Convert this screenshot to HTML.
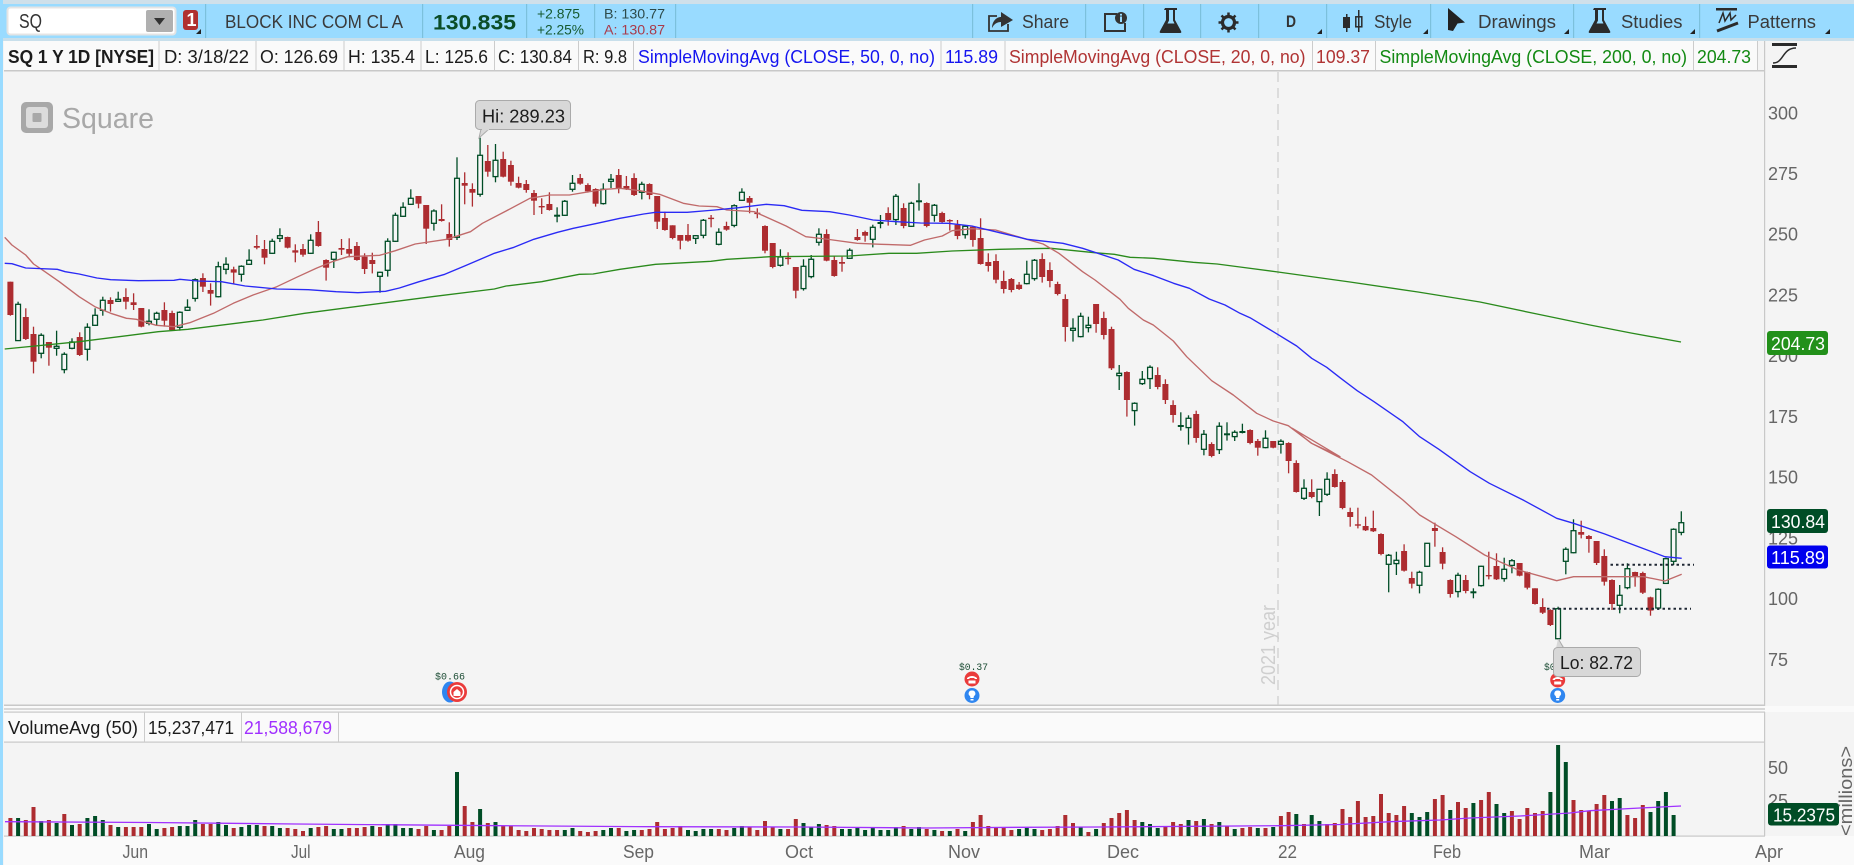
<!DOCTYPE html>
<html><head><meta charset="utf-8"><title>SQ chart</title>
<style>
html,body{margin:0;padding:0;background:#f4f4f4;width:1854px;height:865px;overflow:hidden}
svg{display:block;font-family:"Liberation Sans",sans-serif}
text{white-space:pre}
.l{font-size:18px;fill:#1c1c1c}
.tb{font-size:18px;fill:#3a3a3a}
.ax{font-size:18px;fill:#666}
.tg{font-size:18px;fill:#fff}
</style></head><body>
<svg id="s" xmlns="http://www.w3.org/2000/svg" width="1854" height="865" viewBox="0 0 1854 865">
<rect width="1854" height="865" fill="#f4f4f4"/>
<rect width="1854" height="4" fill="#cfe0ea"/>
<rect y="4" width="1854" height="34" fill="#99dbff"/>
<rect y="38" width="1854" height="3" fill="#c8dfeb"/>
<rect x="0" y="0" width="3" height="865" fill="#99dbff"/>
<rect x="4" y="41" width="1753" height="29" fill="#fafafa"/>
<rect x="4" y="70" width="1761" height="1.5" fill="#c8c8c8"/>
<rect x="4" y="712" width="1761" height="30" fill="#fafafa"/>
<rect x="4" y="836" width="1850" height="29" fill="#fafafa"/>
<rect x="4" y="704.5" width="1761" height="1.5" fill="#c8c8c8"/>
<rect x="4" y="706" width="1850" height="6" fill="#fafafa"/>
<rect x="4" y="708" width="1761" height="2" fill="#d8d8d8"/>
<rect x="4" y="711.5" width="1761" height="1.2" fill="#c8c8c8"/>
<rect x="4" y="741.5" width="1761" height="1.2" fill="#c8c8c8"/>
<rect x="4" y="835.5" width="1761" height="1.2" fill="#c8c8c8"/>
<rect x="1764" y="41" width="1.2" height="665" fill="#c8c8c8"/>
<rect x="1764" y="712" width="1.2" height="124" fill="#c8c8c8"/>

<!-- toolbar dividers -->
<g fill="#7cc0dc">
<rect x="205" y="4" width="1.2" height="34"/><rect x="422" y="4" width="1.2" height="34"/><rect x="526" y="4" width="1.2" height="34"/><rect x="594" y="4" width="1.2" height="34"/><rect x="675" y="4" width="1.2" height="34"/>
<rect x="972" y="4" width="1.2" height="34"/><rect x="1085" y="4" width="1.2" height="34"/><rect x="1143" y="4" width="1.2" height="34"/><rect x="1200" y="4" width="1.2" height="34"/><rect x="1258" y="4" width="1.2" height="34"/><rect x="1326" y="4" width="1.2" height="34"/><rect x="1430" y="4" width="1.2" height="34"/><rect x="1573" y="4" width="1.2" height="34"/><rect x="1699" y="4" width="1.2" height="34"/>
</g>
<!-- symbol box -->
<rect x="7.5" y="7.5" width="168" height="27" rx="3" fill="#fff" stroke="#e4e4e4" stroke-width="2"/>
<text x="19" y="28" font-size="20" fill="#333" textLength="23" lengthAdjust="spacingAndGlyphs">SQ</text>
<rect x="146" y="10" width="27" height="22" rx="2" fill="#b0b0b0"/>
<path d="M154 18h11l-5.500 7z" fill="#333"/>
<rect x="183" y="10" width="15" height="20" rx="3" fill="#b03030"/>
<text x="186.500" y="26" font-size="18" font-weight="bold" fill="#fff">1</text>
<path d="M201 29v5h-5z" fill="#222"/>
<text x="225" y="28" class="tb" textLength="178" lengthAdjust="spacingAndGlyphs" fill="#3c5a68">BLOCK INC COM CL A</text>
<text x="433" y="29.500" font-size="21" font-weight="bold" fill="#0b4d28" textLength="83" lengthAdjust="spacingAndGlyphs">130.835</text>
<text x="537" y="18.500" font-size="14" fill="#165a30" textLength="43" lengthAdjust="spacingAndGlyphs">+2.875</text>
<text x="537" y="34.500" font-size="14" fill="#165a30" textLength="47" lengthAdjust="spacingAndGlyphs">+2.25%</text>
<text x="604" y="18.500" font-size="14" fill="#2d4a4a" textLength="61" lengthAdjust="spacingAndGlyphs">B: 130.77</text>
<text x="604" y="34.500" font-size="14" fill="#a93b4b" textLength="61" lengthAdjust="spacingAndGlyphs">A: 130.87</text>

<!-- toolbar right -->
<path d="M997 16h-8v15h19v-7" fill="none" stroke="#333" stroke-width="1.800"/>
<path d="M1001 12l12 8-12 7v-5c-4 0-7 2-9 6 0-6 4-11 9-11z" fill="#333"/>
<text x="1022" y="28" class="tb" textLength="47" lengthAdjust="spacingAndGlyphs">Share</text>
<path d="M1104 13h13v2h-11v15h18v-7h2v9h-22z" fill="#333"/>
<circle cx="1121" cy="18" r="6" fill="#333"/><rect x="1120" y="16.500" width="2" height="5.500" fill="#99dbff"/><rect x="1120" y="13.800" width="2" height="1.800" fill="#99dbff"/>
<path d="M1165 8h12v2h-2v10l6 11q1 2-1 2h-19q-2 0-1-2l6-11v-10h-2z" fill="#2b2b2b"/><path d="M1169 10h4v10.500l1.500 3h-7l1.500-3z" fill="#99dbff"/>
<g stroke="#2b2b2b" stroke-width="2.500"><path d="M1228.500 12.500v20M1218.500 22.500h20M1221.500 15.500l14 14M1235.500 15.500l-14 14"/></g>
<circle cx="1228.500" cy="22.500" r="6" fill="#99dbff" stroke="#2b2b2b" stroke-width="3.200"/>
<text x="1286" y="27" font-size="17" font-weight="bold" fill="#333" textLength="10" lengthAdjust="spacingAndGlyphs">D</text>
<path d="M1322 29v5h-5z" fill="#222"/>
<rect x="1343" y="17" width="7" height="11" fill="#2b2b2b"/><rect x="1346" y="14" width="1.500" height="18" fill="#2b2b2b"/>
<rect x="1355.800" y="16.800" width="6" height="10" fill="none" stroke="#2b2b2b" stroke-width="1.500"/><rect x="1358" y="10" width="1.500" height="22" fill="#2b2b2b"/>
<text x="1374" y="28" class="tb" textLength="38" lengthAdjust="spacingAndGlyphs">Style</text>
<path d="M1428 29v5h-5z" fill="#222"/>
<path d="M1448 8l17 14.500-7.500 1 -4.500 7.500-5-1z" fill="#222"/>
<text x="1478" y="28" class="tb" textLength="78" lengthAdjust="spacingAndGlyphs">Drawings</text>
<path d="M1569 29v5h-5z" fill="#222"/>
<path d="M1594 8h12v2h-2v10l6 11q1 2-1 2h-19q-2 0-1-2l6-11v-10h-2z" fill="#2b2b2b"/><path d="M1598 10h4v10.500l1.500 3h-7l1.500-3z" fill="#99dbff"/>
<text x="1621" y="28" class="tb" textLength="61.500" lengthAdjust="spacingAndGlyphs">Studies</text>
<path d="M1695 29v5h-5z" fill="#222"/>
<rect x="1716" y="8" width="21" height="2.500" fill="#2b2b2b"/>
<path d="M1719 23l4-10 2 8 5-8 1 7 5-5" fill="none" stroke="#2b2b2b" stroke-width="1.500"/>
<path d="M1717 31l21-8" fill="none" stroke="#2b2b2b" stroke-width="3"/>
<text x="1747.500" y="28" class="tb" textLength="68.500" lengthAdjust="spacingAndGlyphs">Patterns</text>
<path d="M1830 29v5h-5z" fill="#222"/>

<!-- legend -->
<g fill="#cccccc">
<rect x="158.500" y="41" width="1" height="29"/><rect x="255.500" y="41" width="1" height="29"/><rect x="343.500" y="41" width="1" height="29"/><rect x="420.500" y="41" width="1" height="29"/><rect x="494" y="41" width="1" height="29"/><rect x="578" y="41" width="1" height="29"/><rect x="633" y="41" width="1" height="29"/><rect x="940.500" y="41" width="1" height="29"/><rect x="1004.500" y="41" width="1" height="29"/><rect x="1312" y="41" width="1" height="29"/><rect x="1375" y="41" width="1" height="29"/><rect x="1693" y="41" width="1" height="29"/><rect x="1757" y="41" width="1" height="29"/>
<rect x="144" y="712" width="1" height="30"/><rect x="241" y="712" width="1" height="30"/><rect x="338" y="712" width="1" height="30"/>
</g>
<text x="8" y="63" class="l" font-weight="bold" textLength="146" lengthAdjust="spacingAndGlyphs">SQ 1 Y 1D [NYSE]</text>
<text x="164" y="63" class="l" textLength="85" lengthAdjust="spacingAndGlyphs">D: 3/18/22</text>
<text x="260" y="63" class="l" textLength="78" lengthAdjust="spacingAndGlyphs">O: 126.69</text>
<text x="348" y="63" class="l" textLength="67" lengthAdjust="spacingAndGlyphs">H: 135.4</text>
<text x="425" y="63" class="l" textLength="63" lengthAdjust="spacingAndGlyphs">L: 125.6</text>
<text x="498" y="63" class="l" textLength="74" lengthAdjust="spacingAndGlyphs">C: 130.84</text>
<text x="583" y="63" class="l" textLength="44" lengthAdjust="spacingAndGlyphs">R: 9.8</text>
<text x="638" y="63" font-size="18" fill="#1515f0" textLength="297" lengthAdjust="spacingAndGlyphs">SimpleMovingAvg (CLOSE, 50, 0, no)</text>
<text x="945" y="63" font-size="18" fill="#1515f0" textLength="53" lengthAdjust="spacingAndGlyphs">115.89</text>
<text x="1009" y="63" font-size="18" fill="#b03434" textLength="296.500" lengthAdjust="spacingAndGlyphs">SimpleMovingAvg (CLOSE, 20, 0, no)</text>
<text x="1316" y="63" font-size="18" fill="#b03434" textLength="54" lengthAdjust="spacingAndGlyphs">109.37</text>
<text x="1379.500" y="63" font-size="18" fill="#138a13" textLength="307.500" lengthAdjust="spacingAndGlyphs">SimpleMovingAvg (CLOSE, 200, 0, no)</text>
<text x="1697" y="63" font-size="18" fill="#138a13" textLength="54" lengthAdjust="spacingAndGlyphs">204.73</text>
<rect x="1772" y="43" width="25" height="3" fill="#2b2b2b"/><rect x="1772" y="65" width="25" height="3" fill="#2b2b2b"/>
<path d="M1773 63c11 0 9-15 23-15" fill="none" stroke="#2b2b2b" stroke-width="1.500"/>

<!-- logo -->
<rect x="21" y="102" width="32" height="31" rx="5" fill="#a8a8a8"/>
<rect x="26" y="107" width="22" height="21" rx="3" fill="#dcdcdc"/>
<rect x="32.500" y="113" width="9" height="9" rx="1" fill="#a8a8a8"/>
<text x="62" y="128" font-size="29" fill="#a8a8a8" textLength="92" lengthAdjust="spacingAndGlyphs">Square</text>

<!-- year marker -->
<path d="M1278 72V705" stroke="#cfcfcf" stroke-width="1.300" stroke-dasharray="10 6" fill="none"/>
<text transform="translate(1275 685) rotate(-90)" font-size="20" fill="#cfcfcf" textLength="80" lengthAdjust="spacingAndGlyphs">2021 year</text>

<g id="candles"></g>
<g id="mas" fill="none" stroke-width="1.350" stroke-linejoin="round"></g>

<!-- dotted lines -->
<path d="M1610.500 564.800H1694M1547 608.800H1691" stroke="#1f2733" stroke-width="2" stroke-dasharray="2.500 3" fill="none"/>

<!-- Hi / Lo labels -->
<path d="M481 129l-2 9 10-9z" fill="#d8d8d8" stroke="#aaa" stroke-width="1"/>
<rect x="475.500" y="100.500" width="95" height="29" rx="4" fill="#d8d8d8" stroke="#aaa"/>
<path d="M482 129.200h7" stroke="#d8d8d8" stroke-width="2"/>
<text x="482" y="122.500" class="l" textLength="83" lengthAdjust="spacingAndGlyphs">Hi: 289.23</text>

<!-- dividends -->
<g font-family="Liberation Mono,monospace" font-size="10" fill="#1d4d35">
<text x="435" y="679.500" textLength="30" lengthAdjust="spacingAndGlyphs">$0.66</text>
<text x="959" y="670" textLength="29" lengthAdjust="spacingAndGlyphs">$0.37</text>
<text x="1544" y="670" textLength="29" lengthAdjust="spacingAndGlyphs">$0.26</text>
</g>
<g>
<ellipse cx="450" cy="692" rx="8" ry="10.500" fill="#2f86f0"/>
<circle cx="457" cy="692" r="10" fill="#ea3b3b"/><circle cx="457" cy="692" r="6.500" fill="none" stroke="#fff" stroke-width="1.500"/><path d="M453.500 696v-4l3.500-3 3.500 3v4z" fill="#fff"/>
<ellipse cx="972" cy="679" rx="7.500" ry="7.500" fill="#ea3b3b"/><path d="M967 678q5-4 10 0v1h-2.500v-1h-5v1H967zM968.500 680.500h7v3h-7z" fill="#fff"/>
<ellipse cx="972" cy="695.500" rx="7.500" ry="7.500" fill="#2f86f0"/><path d="M972 690.500a3 3 0 0 1 2 5.500l-.5 2h-3l-.5-2a3 3 0 0 1 2-5.500zM970.500 699h3v1.500h-3z" fill="#fff"/>
<ellipse cx="1557.700" cy="680" rx="7.500" ry="7.500" fill="#ea3b3b"/><path d="M1552.700 679q5-4 10 0v1h-2.500v-1h-5v1h-2.500zM1554.200 681.500h7v3h-7z" fill="#fff"/>
<ellipse cx="1557.700" cy="695.500" rx="7.500" ry="7.500" fill="#2f86f0"/><path d="M1557.700 690.500a3 3 0 0 1 2 5.500l-.5 2h-3l-.5-2a3 3 0 0 1 2-5.500zM1556.200 699h3v1.500h-3z" fill="#fff"/>
</g>
<path d="M1558 639l7 9h-9z" fill="#d8d8d8"/><path d="M1558.500 639l4.500 8" stroke="#aaa" fill="none"/>
<rect x="1553.500" y="647.500" width="87" height="29" rx="4" fill="#d8d8d8" stroke="#aaa"/>
<text x="1560" y="669" class="l" textLength="73" lengthAdjust="spacingAndGlyphs">Lo: 82.72</text>

<!-- price axis -->
<g class="ax">
<text x="1768" y="119.500" class="ax" textLength="30" lengthAdjust="spacingAndGlyphs">300</text>
<text x="1768" y="180" class="ax" textLength="30" lengthAdjust="spacingAndGlyphs">275</text>
<text x="1768" y="240.700" class="ax" textLength="30" lengthAdjust="spacingAndGlyphs">250</text>
<text x="1768" y="301.400" class="ax" textLength="30" lengthAdjust="spacingAndGlyphs">225</text>
<text x="1768" y="362" class="ax" textLength="30" lengthAdjust="spacingAndGlyphs">200</text>
<text x="1768" y="423" class="ax" textLength="30" lengthAdjust="spacingAndGlyphs">175</text>
<text x="1768" y="483.500" class="ax" textLength="30" lengthAdjust="spacingAndGlyphs">150</text>
<text x="1768" y="544.500" class="ax" textLength="30" lengthAdjust="spacingAndGlyphs">125</text>
<text x="1768" y="605" class="ax" textLength="30" lengthAdjust="spacingAndGlyphs">100</text>
<text x="1768" y="666" class="ax" textLength="20" lengthAdjust="spacingAndGlyphs">75</text>
<text x="1768" y="774" class="ax" textLength="20" lengthAdjust="spacingAndGlyphs">50</text>
<text x="1768" y="807" class="ax" textLength="20" lengthAdjust="spacingAndGlyphs">25</text>
</g>
<rect x="1767" y="331" width="61" height="24" rx="3" fill="#22901a"/>
<text x="1771" y="350" class="tg" textLength="54" lengthAdjust="spacingAndGlyphs">204.73</text>
<rect x="1767" y="509" width="61" height="24" rx="3" fill="#004d26"/>
<text x="1771" y="528" class="tg" textLength="54" lengthAdjust="spacingAndGlyphs">130.84</text>
<rect x="1767" y="545.500" width="61" height="23" rx="3" fill="#0000ee"/>
<text x="1771" y="564" class="tg" textLength="54" lengthAdjust="spacingAndGlyphs">115.89</text>
<rect x="1768" y="803" width="71" height="22.500" rx="3" fill="#004d26"/>
<text x="1773" y="821.500" class="tg" textLength="62" lengthAdjust="spacingAndGlyphs">15.2375</text>
<text transform="translate(1852 836) rotate(-90)" font-size="18" fill="#666" textLength="90" lengthAdjust="spacingAndGlyphs">&lt;millions&gt;</text>

<!-- volume legend -->
<text x="8" y="734" class="l" textLength="130" lengthAdjust="spacingAndGlyphs">VolumeAvg (50)</text>
<text x="148" y="734" class="l" textLength="86" lengthAdjust="spacingAndGlyphs">15,237,471</text>
<text x="244" y="734" font-size="18" fill="#a030ff" textLength="88" lengthAdjust="spacingAndGlyphs">21,588,679</text>
<g id="vol"></g>
<path d="M5 821.700L150 822.500 296 824 500 825.700 650 826.700 800 827 927 828 1020 827.300 1100 827 1282 825.700 1340 824.500 1390 821.700 1440 820 1470 818 1520 816 1570 813 1590 810.700 1640 808 1681 806" fill="none" stroke="#a030ff" stroke-width="1.300"/>

<!-- date axis -->
<g>
<text x="122.500" y="858" class="ax" textLength="25.500" lengthAdjust="spacingAndGlyphs">Jun</text>
<text x="291" y="858" class="ax" textLength="19.500" lengthAdjust="spacingAndGlyphs">Jul</text>
<text x="454" y="858" class="ax" textLength="31" lengthAdjust="spacingAndGlyphs">Aug</text>
<text x="623" y="858" class="ax" textLength="31" lengthAdjust="spacingAndGlyphs">Sep</text>
<text x="785" y="858" class="ax" textLength="28" lengthAdjust="spacingAndGlyphs">Oct</text>
<text x="948" y="858" class="ax" textLength="32" lengthAdjust="spacingAndGlyphs">Nov</text>
<text x="1107" y="858" class="ax" textLength="32" lengthAdjust="spacingAndGlyphs">Dec</text>
<text x="1278" y="858" class="ax" textLength="19" lengthAdjust="spacingAndGlyphs">22</text>
<text x="1433" y="858" class="ax" textLength="28" lengthAdjust="spacingAndGlyphs">Feb</text>
<text x="1579" y="858" class="ax" textLength="31" lengthAdjust="spacingAndGlyphs">Mar</text>
<text x="1755" y="858" class="ax" textLength="28" lengthAdjust="spacingAndGlyphs">Apr</text>
</g>
</svg>
<script>
(function(){
var R='#ad2c30',G='#004d26';
function X(i){return 10.4+7.7*i}
var zones=[
[140,0,"r425,525,425,527;g493,602,485,602;r531,597,505,600;r582,665,560,700;g586,640,580,655;r606,623,606,677;g619,625,572,647;g643,689,637,700;g606,625,595,628;r591,645,577,648;g562,628,550,662;g526,556,505,558;g481,511,470,527;r480,492,472,515;g478,484,455,486;r471,485,445,508;r487,495,460,510;r504,560,504,562;g544,550,508,556;g520,538,515,558;r510,542,487,560;r519,570,512,572;g517,562,514,572;g502,511,478,513;g419,475,415,485;r414,440,400,456;r450,461,430,497;g380,470,365,472;g373,388,352,403;r388,398,380,432;g379,403,376,425;g361,373,328,375;r318,323,285,328;r327,353,300,373;g304,340,296,342;g287,295,265,306;r291,323,290,325;r331,338,313,367;r327,344,312,350;g301,340,283,342;r276,318,243,320;r360,383,358,422;g337,358,335,384;r324,329,297,345;r327,341,295,352;r318,360,306,362;r350,387,340,402;r360,372,338,400;g397,409,395,458;g304,391,295,410;g226,304,218,306;g202,229,187,231;g175,193,148,195;r168,191,168,205;r195,266,195,312;g213,250,208,272;r237,243,193,245;r282,300,247,320;g115,292,52,300"],
[120,59,"r189,197,157,253;r207,218,190,260;g106,223,53,230;r123,155,75,170;g121,170,72,187;r117,170,95,172;r135,185,122,197;r189,203,170,205;r192,210,180,218;r219,242,210,285;r258,260,235,282;r252,270,217,272;g284,289,262,307;g244,286,240,288;g190,208,165,215;r174,191,162,194;r195,214,190,218;r207,251,205,260;g208,251,190,254;g178,184,162,204;r165,206,147,220;r198,206,168,210;r174,225,160,228;g193,217,185,238;r192,225,190,238;r228,305,228,327;r294,330,275,332;r316,354,316,358;r345,362,345,388;r345,362,312,365;g347,355,345,372;g301,346,297,355;r293,296,285,322;g337,373,325,376;r318,329,305,332;g257,316,253,322"],
[140,95,"g157,181,145,183;r174,188,168,220;r218,220,205,235;r258,332,256,340;r309,381,309,385;g351,376,328,380;r353,356,337,374;r381,452,381,475;g379,446,358,452;g358,410,345,415;g283,307,265,317;r282,362,268,364;r360,408,347,410;r366,371,350,395;g331,355,325,357;r291,300,267,302;r276,287,272,305;g262,298,254,322;g246,250,225,265;r219,240,202,257;g169,239,162,255;r204,258,190,265;g190,259,185,261;g181,185,130,212;r189,258,187,262;g196,226,192,245;r219,246,215,248;r240,243,238,272;r254,288,240,298;g259,284,256,296;r260,300,258,320;r294,372,235,374;r366,378,340,395;r363,419,343,430;r423,447,392,460;r417,450,414,457;r434,447,426,450;g403,431,362,433;g361,416,357,422;r357,411,340,428;r390,423,367,442;r432,462,425,466;r477,561,463,605;g565,571,535,605;g529,590,518,592;g556,563,530,577;r492,552,492,578;r534,585,515,598;r567,685,560,690;g700,707,675,750"],
[280,145,"r276,360,274,410;g370,392,367,437;g298,311,273,315;g262,296,256,327;r285,321,262,328;r312,360,298,372;r375,405,361,428;g435,440,397,452;g415,443,406,494;r402,474,392,488;g463,508,450,526;r492,528,487,532;g439,509,427,522;g460,465,427,482;g457,470,451,483;g453,456,431,460;r450,489,448,493;r483,503,477,527;g475,503,451,505;r483,503,483,505;g484,493,478,521;r489,543,487,580;r549,636,541,638;g625,655,598,660;r636,651,598,655;g628,665,628,708;g598,643,577,648;r582,621,568,623"],
[380,173,"r306,384,300,388;r396,411,383,440;r433,435,383,445;r438,451,410,453;r444,454,392,456;r462,522,460,526;g526,553,522,637;g541,551,515,585;r513,572,493,575;r594,611,575,625;g577,616,572,640;g490,559,489,561;r444,453,428,500;r516,551,502,568;r600,642,598,653;g586,635,578,652;r600,633,585,640;g634,638,625,655;g559,617,557,620;r585,587,515,598;r558,598,520,600;g568,596,533,605;g542,556,537,580;r549,587,549,589;r576,623,575,628;r625,672,625,674;r681,698,655,702;r690,735,688,738;g686,776,680,778;g508,544,502,583;g452,518,418,520;r456,464,422,475;r468,477,465,518;r483,549,483,555;r528,605,508,617;r600,672,598,690;g646,676,615,700;g566,623,550,628;r576,590,575,620;r579,638,575,642;r652,692,650,707;g628,684,625,690;g536,610,533,612;g448,544,445,555;g428,457,394,466"]
];
var h='';
zones.forEach(function(z){
 var base=z[0],idx=z[1];
 z[2].split(';').forEach(function(s,k){
  var c=s[0],v=s.slice(1).split(',').map(Number),
  t=base+v[0]/3,b=base+v[1]/3,hi=base+v[2]/3,lo=base+v[3]/3,x=X(idx+k);
  var col=c=='r'?R:G;
  h+='<rect x="'+(x-0.65).toFixed(2)+'" y="'+hi.toFixed(1)+'" width="1.3" height="'+Math.max(lo-hi,1).toFixed(1)+'" fill="'+col+'"/>';
  if(c=='r'){
   h+='<rect x="'+(x-3).toFixed(2)+'" y="'+t.toFixed(1)+'" width="6" height="'+Math.max(b-t,1.4).toFixed(1)+'" fill="'+col+'"/>';
  }else if(b-t<2){
   h+='<rect x="'+(x-3).toFixed(2)+'" y="'+t.toFixed(1)+'" width="6" height="2" fill="'+col+'"/>';
  }else{
   h+='<rect x="'+(x-2.4).toFixed(2)+'" y="'+t.toFixed(1)+'" width="4.8" height="'+(b-t).toFixed(1)+'" fill="#f7f7f7" stroke="'+col+'" stroke-width="1.300"/>';
  }
 });
});
document.getElementById('candles').innerHTML=h;

function L(pts,fx,base){return pts.map(function(p){return fx(p[0]).toFixed(1)+' '+(base+p[1]/3).toFixed(1)}).join(' L')}
function z3(x){return x/2.529}
function z4(x){return 620+x/2.529}
function z10(x){return 1040+x/3}
function z5(x){return 1100+x/2.08}
var blue='M'+L([[12,370],[30,371],[65,384],[145,388],[165,395],[200,402],[245,414],[280,419],[350,422],[440,421],[455,418],[500,423],[560,425],[620,438],[700,447],[780,449],[850,455],[905,458],[975,454],[1010,444],[1060,425],[1125,403],[1175,378],[1250,340],[1300,322],[1350,298],[1410,277],[1450,265],[1510,250],[1568,235]],z3,140)+' L'+L([[60,222],[90,217],[170,217],[240,210],[300,203],[370,193],[415,197],[460,211],[530,215],[580,225],[640,240],[700,245],[760,249],[830,250],[890,258],[960,278],[1030,298],[1120,310],[1170,325],[1260,360],[1300,388],[1350,407],[1400,430],[1440,445],[1490,477],[1530,495],[1568,520]],z4,140)+' L'+L([[630,113],[700,155],[770,198],[815,235],[860,262],[900,293]],z10,280)+' L'+L([[535,32],[570,65],[630,125],[665,170],[705,208],[770,275],[810,310],[880,360],[950,415],[985,430],[1050,462],[1120,500],[1175,530],[1210,535]],z5,380);
var red='M'+L([[12,292],[30,315],[65,345],[85,372],[110,392],[150,425],[200,470],[240,500],[280,520],[320,535],[345,538],[395,556],[440,560],[480,548],[540,520],[590,490],[640,465],[700,440],[750,412],[800,385],[840,365],[880,350],[960,346],[1000,332],[1050,312],[1130,298],[1190,275],[1220,250],[1280,213],[1340,175],[1390,165],[1440,165],[1490,155],[1530,148],[1568,145]],z3,140)+' L'+L([[50,152],[100,163],[160,190],[200,198],[245,200],[270,210],[340,215],[420,258],[470,290],[520,297],[600,310],[660,313],[735,316],[770,300],[815,288],[840,272],[890,266],[950,270],[1020,295],[1070,312],[1110,340],[1170,395]],z4,140)+' L'+L([[165,0],[240,58],[265,85],[310,120],[340,135],[400,183],[440,230],[515,302],[580,345],[650,400],[700,423],[745,437],[815,490],[900,530]],z10,280)+' L'+L([[400,145],[440,190],[515,245],[565,285],[630,360],[665,405],[740,470],[800,525],[870,570],[950,602],[985,590],[1060,590],[1130,590],[1175,603],[1210,583]],z5,380);
var green='M'+L([[12,627],[200,605],[400,575],[475,568],[665,540],[770,520],[1100,469],[1250,447],[1280,438],[1370,425],[1465,403],[1500,402],[1568,388]],z3,140)+' L'+L([[90,373],[230,364],[270,358],[380,350],[580,348],[680,340],[750,340],[840,333],[960,328],[1090,325],[1200,338],[1250,343],[1290,352],[1350,355],[1450,367],[1510,372],[1568,381]],z4,140)+' L1278 272 L1350 282 L1418 292 L1480 302 L1537 314 L1590 325 L1631 333 L1681 342';
document.getElementById('mas').innerHTML='<path d="'+green+'" stroke="#2a8a1c"/><path d="'+red+'" stroke="#c06a6a"/><path d="'+blue+'" stroke="#2a2af5"/>';

var vols="r18 g18 r16 r29 g15 r16 g13 r22 g11 r12 g18 g20 g16 r11 g9 r9 r9 r9 g12 g7 r8 r9 g10 g10 g16 r12 r12 g14 g11 r8 g9 g11 g11 r10 g10 g8 r8 r7 r5 g8 r9 r10 g7 g7 r8 r8 r9 g10 r9 g12 g12 g8 g8 r7 r10 g6 r6 r10 g64 r30 r14 g27 r13 g14 r10 r10 r6 r5 r8 r7 r6 r6 g6 g8 r5 r4 r5 g6 g8 r8 g5 g6 r6 r7 r14 r7 r8 r10 g6 g5 g7 g7 r7 r6 g8 g10 r9 r6 r15 r9 g7 r7 r17 g13 g9 g12 r11 r10 g7 g7 g9 g6 g9 g6 g6 g9 r10 g7 g9 r7 g6 r5 g5 r7 g5 r14 r21 r10 r9 r9 r6 g7 g8 g7 r6 r7 r10 r21 r13 g9 r4 g7 r13 r18 r23 r26 r16 g14 g12 g8 r9 r14 r12 g16 r15 g17 r12 g14 r10 g7 r8 r9 g8 r8 g9 r20 r24 g22 r12 g21 g15 r12 r13 r27 r19 r35 r19 r20 r42 r23 r21 r30 g23 g19 g24 r37 r41 g26 r34 r28 g33 r36 r44 g32 g23 r25 r17 r28 r23 r25 g44 g91 g74 r36 r26 r25 r32 r41 g35 g38 r21 r18 r31 g24 g35 g44 g21".split(' ');
var v='';
vols.forEach(function(s,i){var c=s[0]=='r'?'#ad2c30':'#004d26',n=+s.slice(1);
 v+='<rect x="'+(X(i)-2).toFixed(1)+'" y="'+(836-n)+'" width="4" height="'+n+'" fill="'+c+'"/>';});
document.getElementById('vol').innerHTML=v;
})();
</script>
</body></html>
